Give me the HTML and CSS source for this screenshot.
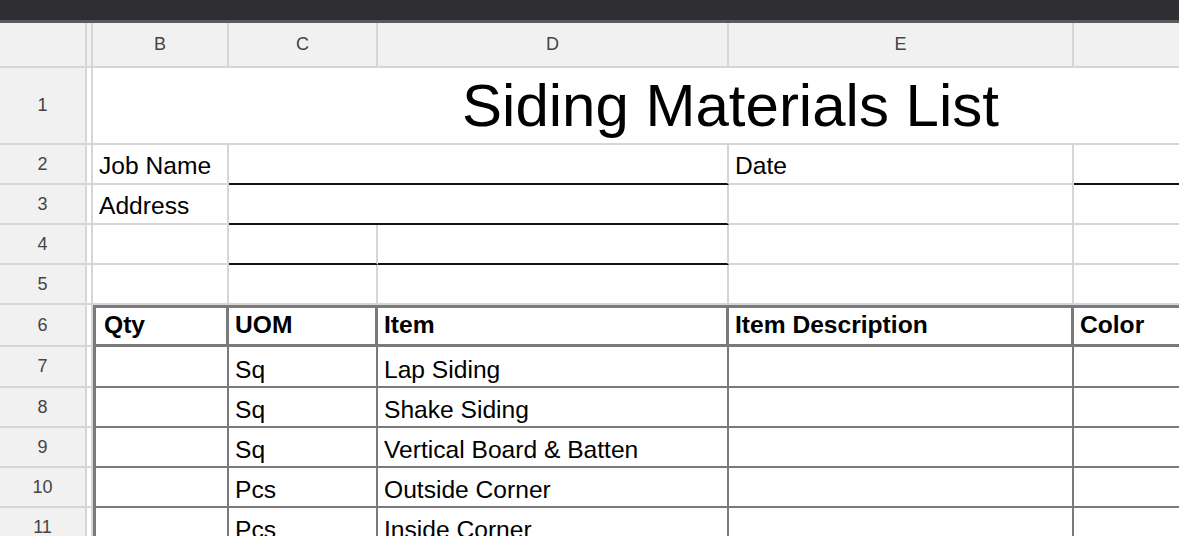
FILE: index.html
```html
<!DOCTYPE html>
<html lang="en">
<head>
  <meta charset="UTF-8" />
  <meta name="viewport" content="width=device-width, initial-scale=1" />
  <title>Siding Materials List</title>
  <link rel="stylesheet" href="styles.css">
</head>
<body>
  <div class="topbar"></div>

  <div class="sheet">
    <!-- column headers -->
    <div class="cell head"></div>
    <div class="cell head freeze"></div>
    <div class="cell head">B</div>
    <div class="cell head">C</div>
    <div class="cell head">D</div>
    <div class="cell head">E</div>
    <div class="cell head"></div>

    <!-- row 1 -->
    <div class="cell head">1</div>
    <div class="cell freeze"></div>
    <div class="cell title">Siding Materials List</div>

    <!-- row 2 -->
    <div class="cell head">2</div>
    <div class="cell freeze"></div>
    <div class="cell">Job Name</div>
    <div class="cell wide line"></div>
    <div class="cell">Date</div>
    <div class="cell line"></div>

    <!-- row 3 -->
    <div class="cell head">3</div>
    <div class="cell freeze"></div>
    <div class="cell">Address</div>
    <div class="cell wide line"></div>
    <div class="cell"></div>
    <div class="cell"></div>

    <!-- row 4 -->
    <div class="cell head">4</div>
    <div class="cell freeze"></div>
    <div class="cell"></div>
    <div class="cell line"></div>
    <div class="cell line"></div>
    <div class="cell"></div>
    <div class="cell"></div>

    <!-- row 5 -->
    <div class="cell head">5</div>
    <div class="cell freeze"></div>
    <div class="cell"></div>
    <div class="cell"></div>
    <div class="cell"></div>
    <div class="cell"></div>
    <div class="cell"></div>

    <!-- row 6: table header -->
    <div class="cell head">6</div>
    <div class="cell freeze"></div>
    <div class="cell th first">Qty</div>
    <div class="cell th">UOM</div>
    <div class="cell th">Item</div>
    <div class="cell th">Item Description</div>
    <div class="cell th">Color</div>

    <div class="cell head">7</div>
    <div class="cell freeze"></div>
    <div class="cell td first"></div>
    <div class="cell td">Sq</div>
    <div class="cell td">Lap Siding</div>
    <div class="cell td"></div>
    <div class="cell td"></div>

    <div class="cell head">8</div>
    <div class="cell freeze"></div>
    <div class="cell td first"></div>
    <div class="cell td">Sq</div>
    <div class="cell td">Shake Siding</div>
    <div class="cell td"></div>
    <div class="cell td"></div>

    <div class="cell head">9</div>
    <div class="cell freeze"></div>
    <div class="cell td first"></div>
    <div class="cell td">Sq</div>
    <div class="cell td">Vertical Board &amp; Batten</div>
    <div class="cell td"></div>
    <div class="cell td"></div>

    <div class="cell head">10</div>
    <div class="cell freeze"></div>
    <div class="cell td first"></div>
    <div class="cell td">Pcs</div>
    <div class="cell td">Outside Corner</div>
    <div class="cell td"></div>
    <div class="cell td"></div>

    <div class="cell head">11</div>
    <div class="cell freeze"></div>
    <div class="cell td first"></div>
    <div class="cell td">Pcs</div>
    <div class="cell td">Inside Corner</div>
    <div class="cell td"></div>
    <div class="cell td"></div>
  </div>
</body>
</html>
```

FILE: styles.css
```css
* {
  box-sizing: border-box;
}
body {
  margin: 0;
  font-family: "Liberation Sans", Arial, sans-serif;
  background-color: #fff;
  color: #000;
  overflow: hidden;
}
.topbar {
  height: 23px;
  background-color: #2f2e33;
  border-bottom: 3px solid #5a5a5e;
}
.sheet {
  display: grid;
  grid-template-columns: 87px 6px 136px 149px 351px 345px 294px;
  grid-template-rows: 45px 77px repeat(4, 40px) 42px 41px repeat(4, 40px);
  width: 1368px;
}
.cell {
  display: flex;
  align-items: flex-end;
  padding: 0 6px 3px;
  border-right: 2px solid #d6d6d6;
  border-bottom: 2px solid #d6d6d6;
  font-size: 24.6px;
  white-space: nowrap;
  overflow: hidden;
}
.head {
  background-color: #f1f1f1;
  color: #444;
  font-size: 18px;
  align-items: center;
  justify-content: center;
  padding: 0;
}
.freeze {
  padding: 0;
}
.title {
  grid-column: span 5;
  font-size: 60px;
  align-items: center;
  justify-content: center;
  padding: 0 0 0 2px;
}
.wide {
  grid-column: span 2;
}
.line {
  border-bottom-color: #111;
}
.th {
  font-weight: bold;
  border-top: 3px solid #7a7a7a;
  border-right: 3px solid #7a7a7a;
  border-bottom: 3px solid #7a7a7a;
  padding-bottom: 5px;
}
.td {
  border-right-color: #7a7a7a;
  border-bottom-color: #7a7a7a;
  padding-bottom: 2px;
}
.first {
  border-left: 3px solid #7a7a7a;
  padding-left: 8px;
}
```
